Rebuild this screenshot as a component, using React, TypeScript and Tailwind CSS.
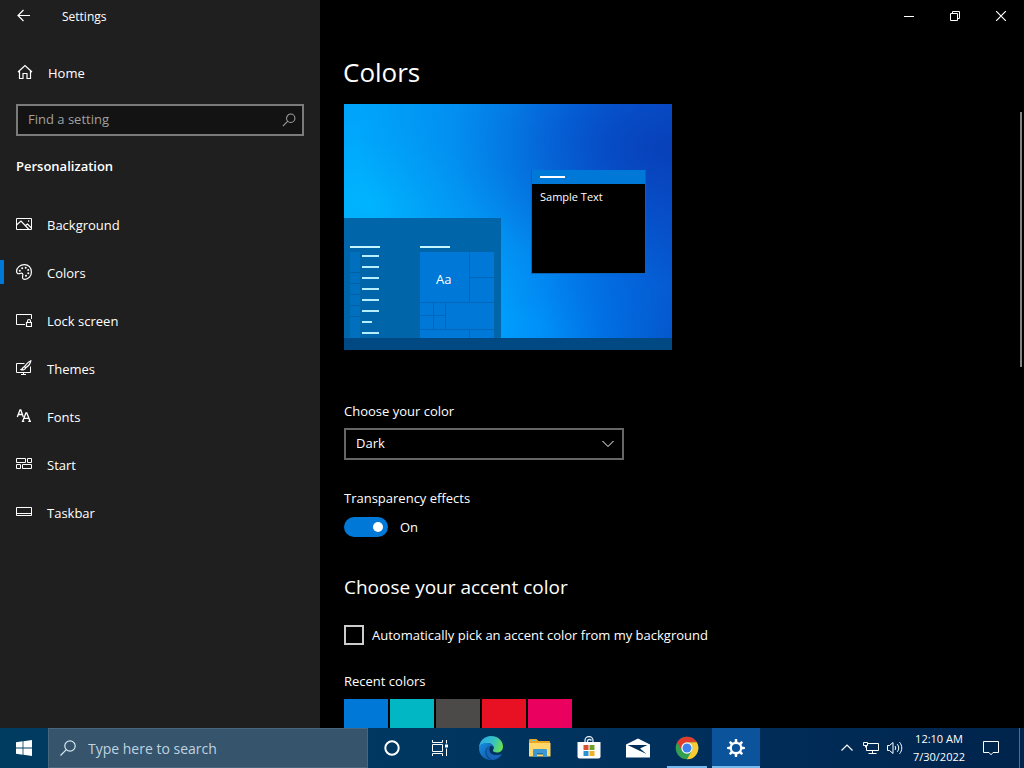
import React, { useState } from "react";

type IconProps = { children: React.ReactNode; size?: number; box?: number; className?: string };

function Icon({ children, size = 16, box = 16, className = "" }: IconProps) {
  return (
    <svg
      width={size}
      height={size}
      viewBox={`0 0 ${box} ${box}`}
      fill="none"
      stroke="currentColor"
      strokeWidth="1"
      className={`shrink-0 ${className}`}
      aria-hidden="true"
    >
      {children}
    </svg>
  );
}

const navItems = [
  {
    label: "Background",
    icon: (
      <>
        <path d="M.5 2.500h15v11H.5z" />
        <path d="M.5 9 5 5l8 8.500M9.500 9.500 11.500 8l4 4" strokeWidth="1.200" />
        <path d="M12 5h1.200" strokeWidth="1.400" />
      </>
    ),
  },
  {
    label: "Colors",
    active: true,
    icon: (
      <>
        <path
          d="M8.500.600C4 .600.600 3.800.600 7.200c0 2 1.200 2.800 2.500 2.500 1.400-.400 2.400-1 3.300-.200 1 .900.200 2.200.100 3.600-.100 1.500.900 2.300 2.300 2.300 3.700 0 6.600-3.300 6.600-7.500S12.500.600 8.500.600z"
          strokeWidth="1.200"
        />
        <g fill="currentColor" stroke="none">
          <circle cx="3.800" cy="6.700" r="1" />
          <circle cx="6.200" cy="4.200" r="1" />
          <circle cx="9.700" cy="3.800" r="1" />
          <circle cx="12.200" cy="6" r="1" />
          <circle cx="12.300" cy="9.200" r="1" />
          <circle cx="10" cy="11.800" r="1" />
        </g>
      </>
    ),
  },
  {
    label: "Lock screen",
    icon: (
      <>
        <path d="M9 12.500H.500v-10h15V7" />
        <path d="M10.500 10.500h5v4h-5zM11.500 10.500V9a1.500 1.500 0 0 1 3 0v1.500" strokeWidth="1.200" />
      </>
    ),
  },
  {
    label: "Themes",
    icon: (
      <>
        <path d="M8.500 3.500h-8v9h14v-6M5 14.500h5M7.500 12.500v2" />
        <path
          d="M14.800.800c-1.800.700-5 3.600-6.400 5.800l1.300 1.200C12 6.200 14.500 3 14.800.800zM8.200 6.800c-1.700.200-1.300 2.200-3 2.800 1.500.700 3.800.300 4.300-1.500"
          strokeWidth="1.200"
        />
      </>
    ),
  },
  {
    label: "Fonts",
    icon: (
      <>
        <path d="M1.300 9 4 2h.800L7.300 9M2.300 6.500h4" strokeWidth="1.300" />
        <path d="M6.800 13l3.100-8h.900l3.200 8M8 10.300h4.800M5.800 13.300h2.500M12.300 13.300H15" strokeWidth="1.300" />
      </>
    ),
  },
  {
    label: "Start",
    icon: <path d="M.5 2.500h9v4h-9zM11.500 2.500h4v4h-4zM.5 8.500h4v4h-4zM6.500 8.500h9v4h-9z" />,
  },
  {
    label: "Taskbar",
    icon: <path d="M.5 3.500h15v8H.5zM.5 9.500h15" />,
  },
];

function Sidebar() {
  return (
    <aside className="flex w-80 shrink-0 flex-col bg-[#1f1f1f]">
      <div className="flex h-8 shrink-0 items-center">
        <button aria-label="Back" className="flex w-12 justify-center">
          <Icon>
            <path d="M14 7.500H2M7.500 2 2 7.500 7.500 13" strokeWidth="1.200" />
          </Icon>
        </button>
        <span className="pl-3.5 pt-0.5 text-xs">Settings</span>
      </div>
      <a href="#home" className="mt-4 flex h-12 shrink-0 items-center gap-4 px-4">
        <Icon className="ml-px">
          <path d="M1 8 8 1.500 15 8M2.500 6.800v7.700h3.500v-5h4v5h3.500V6.800" strokeWidth="1.200" />
        </Icon>
        <span className="-ml-px pt-1">Home</span>
      </a>
      <form className="mx-4 mt-2 flex h-8 shrink-0 items-center border-2 border-[#7a7a7a] bg-[#131313] pl-2.5 pr-1.5">
        <input
          aria-label="Find a setting"
          placeholder="Find a setting"
          className="min-w-0 flex-1 bg-transparent outline-none placeholder:text-[#a0a0a0]"
        />
        <button type="button" aria-label="Search" className="text-[#a0a0a0]">
          <Icon size={14}>
            <circle cx="10" cy="6" r="4.800" strokeWidth="1.200" />
            <path d="M6.600 9.400 1 15" strokeWidth="1.200" />
          </Icon>
        </button>
      </form>
      <h2 className="mt-5 px-4 font-semibold leading-5">Personalization</h2>
      <nav className="mt-6 flex flex-col">
        {navItems.map((item) => (
          <a key={item.label} href="#item" className="flex h-12 items-center">
            <span className={item.active ? "h-6 w-1 bg-[#0078d7]" : "h-6 w-1"} />
            <span className="flex items-center gap-[15px] pl-3">
              <Icon>{item.icon}</Icon>
              <span className="pt-1">{item.label}</span>
            </span>
          </a>
        ))}
      </nav>
    </aside>
  );
}

const listRows = [0, 1, 2, 3, 4, 5, 6, 7];

function Preview() {
  return (
    <div className="relative h-[246px] w-[328px] shrink-0 overflow-hidden bg-[radial-gradient(ellipse_at_100%_18%,#0840b8_0%,#0848c4b0_25%,#0860d850_48%,transparent_68%),radial-gradient(ellipse_at_8%_40%,#00b4ff_0%,#00b0ff80_30%,transparent_60%),linear-gradient(95deg,#00a0f8_0%,#00a0fc_48%,#0090f8_62%,#0070e4_80%,#0556cc_100%)]">
      <svg className="absolute bottom-0 left-0" width="328" height="132" viewBox="0 0 328 132" aria-hidden="true">
        <path d="M0 0h157v120H0z" fill="#0065a9" />
        <path d="M0 120h328v12H0z" fill="#004982" />
        <path d="M6 34h10v86H6z" fill="#006fbd" />
        <path d="M6 54.500h10M6 65.500h10M6 76.500h10M6 87.500h10M6 98.500h10" stroke="#0061a7" />
        <path d="M76 34h74v86H76z" fill="#0078d7" />
        <path
          d="M125.500 34v50M126 59.500h24M76 84.500h74M89.500 85v26M101.500 85v26M76 97.500h25M76 111.500h74M125.500 112v8"
          stroke="#0067b8"
          fill="none"
        />
        <path d="M6 28h30v2H6zM76 28h30v2H76z" fill="#c5f5ff" />
        {listRows.map((row) => (
          <rect key={row} x="18" y={37 + row * 11} width={row === 6 ? 10 : 17} height="2" fill="#b5efff" />
        ))}
      </svg>
      <span className="absolute left-[92px] top-[165px] text-[13px] leading-5">Aa</span>
      <div className="absolute left-[187px] top-[66px] flex h-[104px] w-[115px] flex-col border-x border-b border-[#0a63b8] bg-black">
        <div className="flex h-3.5 items-center bg-[#0078d7] px-2">
          <span className="h-0.5 w-[25px] bg-white" />
        </div>
        <span className="px-2 pt-1 text-[11px] leading-[18px]">Sample Text</span>
      </div>
    </div>
  );
}

const swatches = [
  { name: "Blue", color: "bg-[#0078d7]" },
  { name: "Teal", color: "bg-[#00b7c3]" },
  { name: "Gray", color: "bg-[#4c4a48]" },
  { name: "Red", color: "bg-[#e81123]" },
  { name: "Pink", color: "bg-[#ea005e]" },
];

function ColorsPage() {
  const [transparent, setTransparent] = useState(true);
  return (
    <main className="flex min-w-0 flex-1 flex-col bg-black">
      <div className="flex h-8 shrink-0 justify-end">
        <button aria-label="Minimize" className="flex w-[46px] items-center justify-center">
          <Icon size={10} box={10}>
            <path d="M0 5.500h10" />
          </Icon>
        </button>
        <button aria-label="Restore" className="flex w-[46px] items-center justify-center">
          <Icon size={10} box={10}>
            <path d="M.5 2.500h7v7h-7zM2.500 2.500v-2h7v7h-2" />
          </Icon>
        </button>
        <button aria-label="Close" className="flex w-[46px] items-center justify-center">
          <Icon size={10} box={10}>
            <path d="m0 0 10 10M10 0 0 10" strokeWidth="1.200" />
          </Icon>
        </button>
      </div>
      <h1 className="shrink-0 px-[23px] pt-5 text-[26px] leading-10">Colors</h1>
      <div className="mt-3 flex min-h-0 flex-1 justify-between overflow-hidden">
        <div className="flex flex-col pl-6">
          <Preview />
          <label htmlFor="mode" className="mt-[51px] leading-5">
            Choose your color
          </label>
          <div className="relative mt-[7px] h-8 w-[280px] shrink-0">
            <select
              id="mode"
              defaultValue="Dark"
              className="h-full w-full appearance-none border-2 border-[#666] bg-black px-2.5 outline-none"
            >
              <option>Light</option>
              <option>Dark</option>
              <option>Custom</option>
            </select>
            <Icon size={12} box={12} className="pointer-events-none absolute right-2.5 top-2.5">
              <path d="m.5 3 5.500 5.500L11.500 3" />
            </Icon>
          </div>
          <label htmlFor="transparency" className="mt-7 leading-5">
            Transparency effects
          </label>
          <div className="mt-[9px] flex shrink-0 items-center gap-3 leading-5">
            <input
              id="transparency"
              type="checkbox"
              role="switch"
              checked={transparent}
              onChange={(e) => setTransparent(e.target.checked)}
              className="flex h-5 w-11 appearance-none items-center rounded-full bg-[#555] px-[5px] after:size-2.5 after:rounded-full after:bg-white checked:justify-end checked:bg-[#0078d7]"
            />
            <span>{transparent ? "On" : "Off"}</span>
          </div>
          <h2 className="mt-9 text-[19px] leading-7">Choose your accent color</h2>
          <label className="mt-6 flex shrink-0 items-center gap-2 leading-5">
            <input type="checkbox" className="size-5 appearance-none border-2 border-[#ccc] checked:bg-[#0078d7]" />
            Automatically pick an accent color from my background
          </label>
          <h3 className="mt-[26px] leading-5">Recent colors</h3>
          <div className="mt-2 flex gap-0.5">
            {swatches.map((s) => (
              <button key={s.name} aria-label={s.name} className={`size-11 ${s.color}`} />
            ))}
          </div>
        </div>
        <div className="mr-0.5 mt-2 h-[255px] w-0.5 shrink-0 bg-[#858585]" />
      </div>
    </main>
  );
}

function Edge() {
  return (
    <svg width="26" height="26" viewBox="0 0 26 26" aria-hidden="true">
      <defs>
        <linearGradient id="edgeTop" x1="0" y1="0.300" x2="1" y2="0.600">
          <stop offset="0" stopColor="#2aa9e8" />
          <stop offset="0.550" stopColor="#35c1c4" />
          <stop offset="1" stopColor="#6be04f" />
        </linearGradient>
        <linearGradient id="edgeLow" x1="0" y1="0" x2="1" y2="1">
          <stop offset="0" stopColor="#1b8fe0" />
          <stop offset="1" stopColor="#0c4fa3" />
        </linearGradient>
      </defs>
      <path d="M1 13C1 6.500 6.300 1 13 1c7 0 12 5 12 10.400 0 4-3 6-6 6-2.500 0-4.200-.800-4.200-1.600s1-1.200 1-3c0-2.600-3-4.800-6.300-4.800C5 8 1.600 10.500 1 13z" fill="url(#edgeTop)" />
      <path d="M1 13c.600-3 3.800-5 8-5 3.700 0 6.800 2 6.800 4.800 0-1-1.500-2-3-2-3 0-5.300 3-5.300 6 0 4 3 7.200 7 8C7 26 1 20.500 1 13z" fill="url(#edgeLow)" />
      <path d="M9 12.800C6.600 17 9 23 14.500 24.900c4.500-.300 7.300-2.500 8.900-5.200.200-.500-.200-.800-.800-.500-5 2.200-11 .300-11.300-4.500 0-1.500.400-2.900 1.500-3.900-1.500 0-3 .700-3.800 2z" fill="#1764b8" />
    </svg>
  );
}

function Explorer() {
  return (
    <svg width="22" height="20" viewBox="0 0 22 20" aria-hidden="true">
      <path d="M0 2.500C0 1.500.500 1 1.500 1h6l2 2H20c.600 0 1 .400 1 1v4H0z" fill="#e9a620" />
      <path d="M0 5h21.500v13.500H0z" fill="#ffd76a" />
      <path d="M2.500 2.500h4" stroke="#5cc8e8" />
      <path d="M4 19v-6.500c0-1 .500-1.500 1.500-1.500h11c1 0 1.500.500 1.500 1.500V19h-4v-4H8v4z" fill="#3c97d3" />
      <path d="M8 15h6v1.500H8z" fill="#236ea5" />
    </svg>
  );
}

function Store() {
  return (
    <svg width="24" height="24" viewBox="0 0 24 24" aria-hidden="true">
      <path d="M8 7V4.500a4 4 0 0 1 8 0V7M10.500 7V4.500a2.500 2.500 0 0 1 4 0" fill="none" stroke="#d9e8f2" strokeWidth="1.300" />
      <path d="M.5 6h23v14.500a2 2 0 0 1-2 2h-19a2 2 0 0 1-2-2z" fill="#fff" />
      <path d="M6.500 9h5v5h-5z" fill="#d8502f" />
      <path d="M12.500 9h5v5h-5z" fill="#6ca32c" />
      <path d="M6.500 15h5v5h-5z" fill="#2c91cc" />
      <path d="M12.500 15h5v5h-5z" fill="#efb127" />
    </svg>
  );
}

function Mail() {
  return (
    <svg width="24" height="20" viewBox="0 0 24 20" aria-hidden="true">
      <path d="M0 6.500 12 .500l12 6V19.500H0z" fill="#fff" />
      <path d="M2.500 7h19L14 10.500l6.500 5.500L1.500 7z" fill="#00305a" />
    </svg>
  );
}

function Chrome() {
  return (
    <svg width="24" height="24" viewBox="0 0 24 24" aria-hidden="true">
      <circle cx="12" cy="12" r="11.300" fill="#34a04f" />
      <path d="M2.200 6.350A11.300 11.300 0 0 1 21.800 6.350L12 6.400a5.600 5.600 0 0 0-4.850 8.400z" fill="#e33b2e" />
      <path d="M21.800 6.350A11.300 11.300 0 0 1 12 23.300l4.850-8.500A5.600 5.600 0 0 0 12 6.400z" fill="#fbc934" />
      <circle cx="12" cy="12" r="5.700" fill="#fff" />
      <circle cx="12" cy="12" r="4.500" fill="#3f82ee" />
    </svg>
  );
}

function Gear() {
  const teeth = [0, 45, 90, 135, 180, 225, 270, 315];
  return (
    <svg width="18" height="18" viewBox="0 0 18 18" aria-hidden="true">
      <circle cx="9" cy="9" r="5.200" fill="none" stroke="#fff" strokeWidth="2.200" />
      {teeth.map((a) => (
        <path key={a} d="M7.500 3.500 7.900.100h2.200l.400 3.400z" fill="#fff" transform={`rotate(${a} 9 9)`} />
      ))}
    </svg>
  );
}

function Taskbar() {
  return (
    <footer className="flex h-10 shrink-0 bg-[linear-gradient(90deg,#003b60_0%,#003760_40%,#002f5b_68%,#00244c_100%)]">
      <button aria-label="Start" className="flex w-12 items-center justify-center">
        <svg width="16" height="16" viewBox="0 0 16 16" fill="#fff" aria-hidden="true">
          <path d="M0 2.300 6.600 1.300v6.200H0zM7.400 1.200 16 0v7.500H7.400zM0 8.500h6.600v6.200L0 13.700zM7.400 8.500H16V16l-8.600-1.200z" />
        </svg>
      </button>
      <form className="flex w-80 items-center gap-3 border border-[#48677c] bg-[#36546b] pl-[11px] text-[#d5e9f3]">
        <Icon size={16}>
          <circle cx="10" cy="6" r="5.200" strokeWidth="1.200" />
          <path d="M6.300 9.700.500 15.500" strokeWidth="1.200" />
        </Icon>
        <input
          aria-label="Type here to search"
          placeholder="Type here to search"
          className="min-w-0 flex-1 bg-transparent pt-0.5 text-sm outline-none placeholder:text-[#bfd3e0]"
        />
      </form>
      <button aria-label="Cortana" className="flex w-12 items-center justify-center">
        <Icon>
          <circle cx="8" cy="8" r="6.700" strokeWidth="2" />
        </Icon>
      </button>
      <button aria-label="Task View" className="flex w-12 items-center justify-center">
        <Icon>
          <path d="M.5 0v2.500h10V0M.5 4.500h10v7H.5zM.5 16v-2.500h10V16M14.500 0v3.500M14.500 8.500V16" />
          <path d="M13 4.500h3v3h-3z" fill="currentColor" stroke="none" />
        </Icon>
      </button>
      <div className="ml-[3px] flex gap-px">
        <button aria-label="Microsoft Edge" className="flex w-12 items-center justify-center">
          <Edge />
        </button>
        <button aria-label="File Explorer" className="flex w-12 items-center justify-center">
          <Explorer />
        </button>
        <button aria-label="Microsoft Store" className="flex w-12 items-center justify-center">
          <Store />
        </button>
        <button aria-label="Mail" className="flex w-12 items-center justify-center">
          <Mail />
        </button>
        <button aria-label="Google Chrome" className="flex w-12 flex-col items-center">
          <span className="flex flex-1 items-center pt-0.5">
            <Chrome />
          </span>
          <span className="h-0.5 w-10 bg-[#76b9ed]" />
        </button>
        <button aria-label="Settings" className="flex w-12 flex-col items-center bg-[#0b539b]">
          <span className="flex flex-1 items-center pt-0.5">
            <Gear />
          </span>
          <span className="h-0.5 w-full bg-[#76b9ed]" />
        </button>
      </div>
      <div className="ml-auto flex">
        <button aria-label="Show hidden icons" className="flex w-6 items-center justify-center">
          <Icon size={12} box={12}>
            <path d="m.5 8.500 5.500-5.500L11.500 8.500" strokeWidth="1.200" />
          </Icon>
        </button>
        <button aria-label="Network" className="flex w-6 items-center justify-center">
          <Icon>
            <path d="M5 3.500h10.500v7h-12V6M9.500 10.500v3M5.500 13.500h8" />
            <path d="M.5 2.500h4v3h-4zM2.500 5.500v2" />
          </Icon>
        </button>
        <button aria-label="Volume" className="flex w-6 items-center justify-center">
          <Icon>
            <path d="M.5 5.500h2L6 2.500v11L2.500 10.500h-2zM8 6c.900 1.200.900 2.800 0 4M10.200 4.200c2 2.300 2 5.300 0 7.600M12.500 2.200c3 3.400 3 8.200 0 11.600" />
          </Icon>
        </button>
        <button className="flex w-16 flex-col items-center justify-center text-[11px] leading-[18px]">
          <span>12:10 AM</span>
          <span>7/30/2022</span>
        </button>
        <button aria-label="Notifications" className="flex w-10 items-center justify-center">
          <Icon>
            <path d="M.5 1.500h15v11H10L8 14.800 6 12.500H.500z" />
          </Icon>
        </button>
        <button aria-label="Show desktop" className="ml-2 w-[5px] border-l border-[#4d6f8c]" />
      </div>
    </footer>
  );
}

export default function App() {
  return (
    <div className="flex h-screen flex-col overflow-hidden bg-black font-['Open_Sans','Noto_Sans',sans-serif] text-[13px] text-white">
      <div className="flex min-h-0 flex-1">
        <Sidebar />
        <ColorsPage />
      </div>
      <Taskbar />
    </div>
  );
}
